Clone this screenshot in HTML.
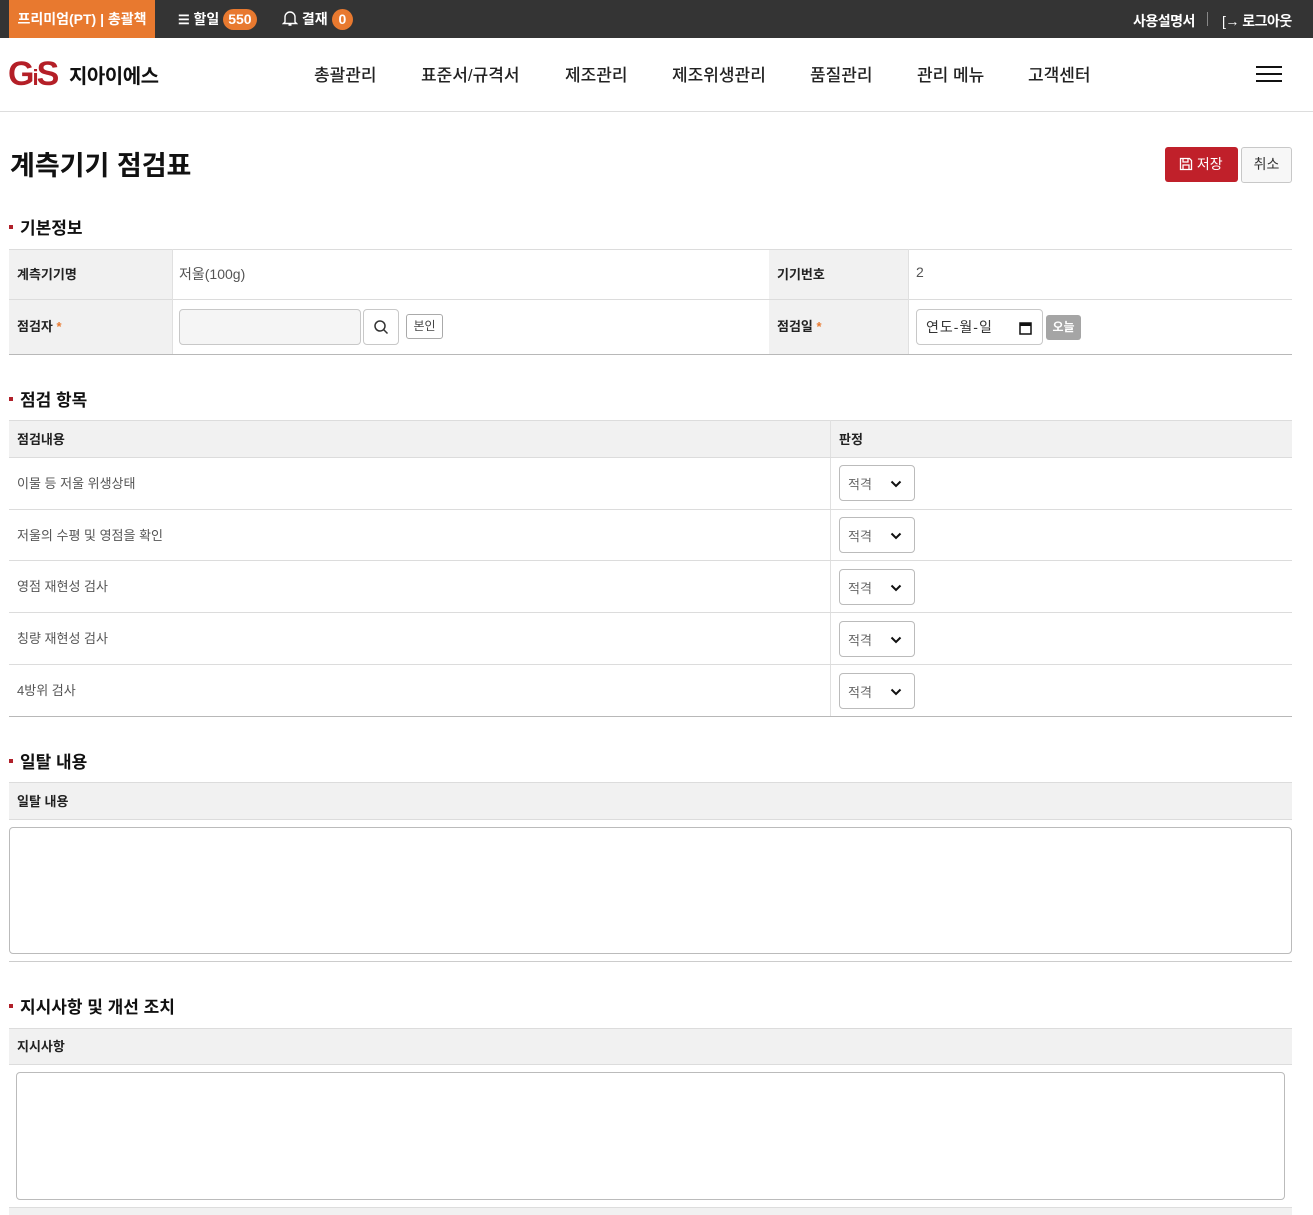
<!DOCTYPE html>
<html><head><meta charset="utf-8"><style>
*{box-sizing:border-box;margin:0;padding:0}
body{width:1313px;height:1215px;overflow:hidden;background:#fff;font-family:"Liberation Sans","Noto Sans CJK KR",sans-serif;color:#222;position:relative}
.a{position:absolute}
.top{left:0;top:0;width:1313px;height:38px;background:#343434;color:#fff;font-weight:bold;font-size:14px}
.badge{display:inline-block;background:#e8792f;color:#fff;border-radius:11px;padding:0 5px;height:21px;line-height:21px;font-size:14px}
.nav{top:61px;font-size:17px;color:#222;font-weight:500}
.sec{font-size:17px;font-weight:bold;color:#111}
.sec:before{content:"";position:absolute;left:-11px;top:11px;width:4px;height:4px;background:#b0202a}
.lbl{background:#f1f1f1;font-size:13px;font-weight:bold;color:#222}
.hl{background:#dcdcdc;height:1px}
.dl{background:#b8b8b8;height:1px}
.t13{font-size:13px;color:#555}
.sel{width:76px;height:36px;border:1px solid #bbb;border-radius:4px;background:#fff;font-size:13px;color:#666;padding:8px 0 0 8px}
.sel svg{position:absolute;left:50px;top:14px}
</style></head><body>
<div class="a top">
 <div class="a" style="left:9px;top:0;width:146px;height:38px;background:#e8792f;text-align:center;line-height:38px;font-size:14px">프리미엄(PT) | 총괄책</div>
 <div class="a" style="left:178px;top:9px;line-height:21px"><span style="font-size:13px">☰</span> 할일 <span class="badge">550</span></div>
 <div class="a" style="left:282px;top:9px;line-height:21px"><svg width="16" height="17" viewBox="0 0 16 17" style="vertical-align:-3px"><path d="M3 12V7a5 5 0 0 1 10 0v5l1.5 1.5h-13z M6.5 15h3" fill="none" stroke="#fff" stroke-width="1.4"/></svg> 결재 <span class="badge" style="padding:0 7px">0</span></div>
 <div class="a" style="left:1133px;top:11px;font-size:14px;letter-spacing:-0.5px">사용설명서</div>
 <div class="a" style="left:1207px;top:12px;width:1px;height:14px;background:#888"></div>
 <div class="a" style="left:1222px;top:11px;font-size:14px;letter-spacing:-0.5px"><span style="font-weight:normal">[→</span> 로그아웃</div>
</div>
<div class="a" style="left:8px;top:57px;font-size:34px;font-weight:900;color:#b41f27;letter-spacing:-2px;font-family:'Liberation Sans',sans-serif;line-height:34px">G<span style="font-size:22px">i</span>S</div>
<div class="a" style="left:69px;top:60px;font-size:20px;font-weight:bold;color:#111;letter-spacing:-0.5px">지아이에스</div>
<div class="a nav" style="left:314px">총괄관리</div>
<div class="a nav" style="left:421px">표준서/규격서</div>
<div class="a nav" style="left:565px">제조관리</div>
<div class="a nav" style="left:672px">제조위생관리</div>
<div class="a nav" style="left:810px">품질관리</div>
<div class="a nav" style="left:917px">관리 메뉴</div>
<div class="a nav" style="left:1028px">고객센터</div>
<div class="a" style="left:1256px;top:66px;width:26px;height:2px;background:#111;box-shadow:0 7px 0 #111,0 14px 0 #111"></div>
<div class="a" style="left:0;top:111px;width:1313px;height:1px;background:#ddd"></div>

<div class="a" style="left:10px;top:144px;font-size:27px;font-weight:bold;color:#111">계측기기 점검표</div>
<div class="a" style="left:1165px;top:147px;width:73px;height:35px;background:#c0202a;border-radius:3px;color:#fff;font-size:14px;line-height:34px;padding-left:14px"><svg width="14" height="14" viewBox="0 0 14 14" style="vertical-align:-2px"><path d="M1.5 1.5h9l2 2v9h-11z M4 1.5v3.5h5V1.5 M4 12.5V8h6v4.5" fill="none" stroke="#fff" stroke-width="1.3"/></svg> 저장</div>
<div class="a" style="left:1241px;top:147px;width:51px;height:36px;border:1px solid #c8c8c8;border-radius:3px;background:#f7f7f7;font-size:14px;text-align:center;line-height:33px;color:#333">취소</div>

<div class="a sec" style="left:20px;top:214px">기본정보</div>
<div class="a lbl" style="left:9px;top:249px;width:163px;height:105px"></div>
<div class="a lbl" style="left:769px;top:249px;width:139px;height:105px"></div>
<div class="a hl" style="left:9px;top:249px;width:1283px"></div>
<div class="a hl" style="left:9px;top:299px;width:1283px"></div>
<div class="a dl" style="left:9px;top:354px;width:1283px"></div>
<div class="a" style="left:172px;top:249px;width:1px;height:105px;background:#e0e0e0"></div>
<div class="a" style="left:908px;top:249px;width:1px;height:105px;background:#e0e0e0"></div>
<div class="a lbl" style="left:17px;top:264px;background:none">계측기기명</div>
<div class="a t13" style="left:179px;top:264px;font-size:14px">저울(100g)</div>
<div class="a lbl" style="left:777px;top:264px;background:none">기기번호</div>
<div class="a t13" style="left:916px;top:264px;font-size:14px">2</div>
<div class="a lbl" style="left:17px;top:316px;background:none">점검자 <span style="color:#e8792f">*</span></div>
<div class="a" style="left:179px;top:309px;width:182px;height:36px;border:1px solid #c8c8c8;border-radius:4px;background:#f5f5f5"></div>
<div class="a" style="left:363px;top:309px;width:36px;height:36px;border:1px solid #c8c8c8;border-radius:4px"><svg class="a" style="left:9px;top:9px" width="17" height="17" viewBox="0 0 17 17"><circle cx="7" cy="7" r="5" fill="none" stroke="#333" stroke-width="1.5"/><path d="M10.5 10.5l4 4" stroke="#333" stroke-width="1.5"/></svg></div>
<div class="a" style="left:406px;top:314px;width:37px;height:25px;border:1px solid #aaa;border-radius:3px;font-size:12px;text-align:center;line-height:23px;color:#444">본인</div>
<div class="a lbl" style="left:777px;top:316px;background:none">점검일 <span style="color:#e8792f">*</span></div>
<div class="a" style="left:916px;top:309px;width:127px;height:36px;border:1px solid #c8c8c8;border-radius:4px;font-size:14px;padding:7px 0 0 9px;color:#333;letter-spacing:1px">연도-월-일<svg class="a" style="left:102px;top:11px" width="13" height="14" viewBox="0 0 13 14"><rect x="1" y="2" width="11" height="11" fill="none" stroke="#111" stroke-width="1.5"/><rect x="1" y="2" width="11" height="3" fill="#111"/></svg></div>
<div class="a" style="left:1046px;top:315px;width:35px;height:25px;background:#a5a5a5;border-radius:3px;color:#fff;font-size:12px;font-weight:bold;text-align:center;line-height:24px">오늘</div>

<div class="a sec" style="left:20px;top:386px">점검 항목</div>
<div class="a lbl" style="left:9px;top:420px;width:1283px;height:37px"></div>
<div class="a hl" style="left:9px;top:420px;width:1283px"></div>
<div class="a lbl" style="left:17px;top:429px;background:none">점검내용</div>
<div class="a lbl" style="left:839px;top:429px;background:none">판정</div>
<div class="a" style="left:830px;top:420px;width:1px;height:296px;background:#e0e0e0"></div>
<div class="a hl" style="left:9px;top:457px;width:1283px"></div>
<div class="a hl" style="left:9px;top:509px;width:1283px"></div>
<div class="a hl" style="left:9px;top:560px;width:1283px"></div>
<div class="a hl" style="left:9px;top:612px;width:1283px"></div>
<div class="a hl" style="left:9px;top:664px;width:1283px"></div>
<div class="a dl" style="left:9px;top:716px;width:1283px"></div>
<div class="a t13" style="left:17px;top:473px">이물 등 저울 위생상태</div>
<div class="a t13" style="left:17px;top:525px">저울의 수평 및 영점을 확인</div>
<div class="a t13" style="left:17px;top:576px">영점 재현성 검사</div>
<div class="a t13" style="left:17px;top:628px">칭량 재현성 검사</div>
<div class="a t13" style="left:17px;top:680px">4방위 검사</div>
<div class="a sel" style="left:839px;top:465px">적격<svg width="12" height="8" viewBox="0 0 12 8"><path d="M1.5 1.5l4.5 4.5 4.5-4.5" fill="none" stroke="#111" stroke-width="2"/></svg></div>
<div class="a sel" style="left:839px;top:517px">적격<svg width="12" height="8" viewBox="0 0 12 8"><path d="M1.5 1.5l4.5 4.5 4.5-4.5" fill="none" stroke="#111" stroke-width="2"/></svg></div>
<div class="a sel" style="left:839px;top:569px">적격<svg width="12" height="8" viewBox="0 0 12 8"><path d="M1.5 1.5l4.5 4.5 4.5-4.5" fill="none" stroke="#111" stroke-width="2"/></svg></div>
<div class="a sel" style="left:839px;top:621px">적격<svg width="12" height="8" viewBox="0 0 12 8"><path d="M1.5 1.5l4.5 4.5 4.5-4.5" fill="none" stroke="#111" stroke-width="2"/></svg></div>
<div class="a sel" style="left:839px;top:673px">적격<svg width="12" height="8" viewBox="0 0 12 8"><path d="M1.5 1.5l4.5 4.5 4.5-4.5" fill="none" stroke="#111" stroke-width="2"/></svg></div>

<div class="a sec" style="left:20px;top:748px">일탈 내용</div>
<div class="a lbl" style="left:9px;top:782px;width:1283px;height:37px"></div>
<div class="a hl" style="left:9px;top:782px;width:1283px"></div>
<div class="a hl" style="left:9px;top:819px;width:1283px"></div>
<div class="a lbl" style="left:17px;top:791px;background:none">일탈 내용</div>
<div class="a" style="left:9px;top:827px;width:1283px;height:127px;border:1px solid #bbb;border-radius:4px"></div>
<div class="a dl" style="left:9px;top:961px;width:1283px;background:#ccc"></div>

<div class="a sec" style="left:20px;top:993px">지시사항 및 개선 조치</div>
<div class="a lbl" style="left:9px;top:1028px;width:1283px;height:36px"></div>
<div class="a hl" style="left:9px;top:1028px;width:1283px"></div>
<div class="a hl" style="left:9px;top:1064px;width:1283px"></div>
<div class="a lbl" style="left:17px;top:1036px;background:none">지시사항</div>
<div class="a" style="left:16px;top:1072px;width:1269px;height:128px;border:1px solid #bbb;border-radius:4px"></div>
<div class="a" style="left:9px;top:1207px;width:1283px;height:8px;background:#f1f1f1;border-top:1px solid #ddd"></div>
</body></html>
